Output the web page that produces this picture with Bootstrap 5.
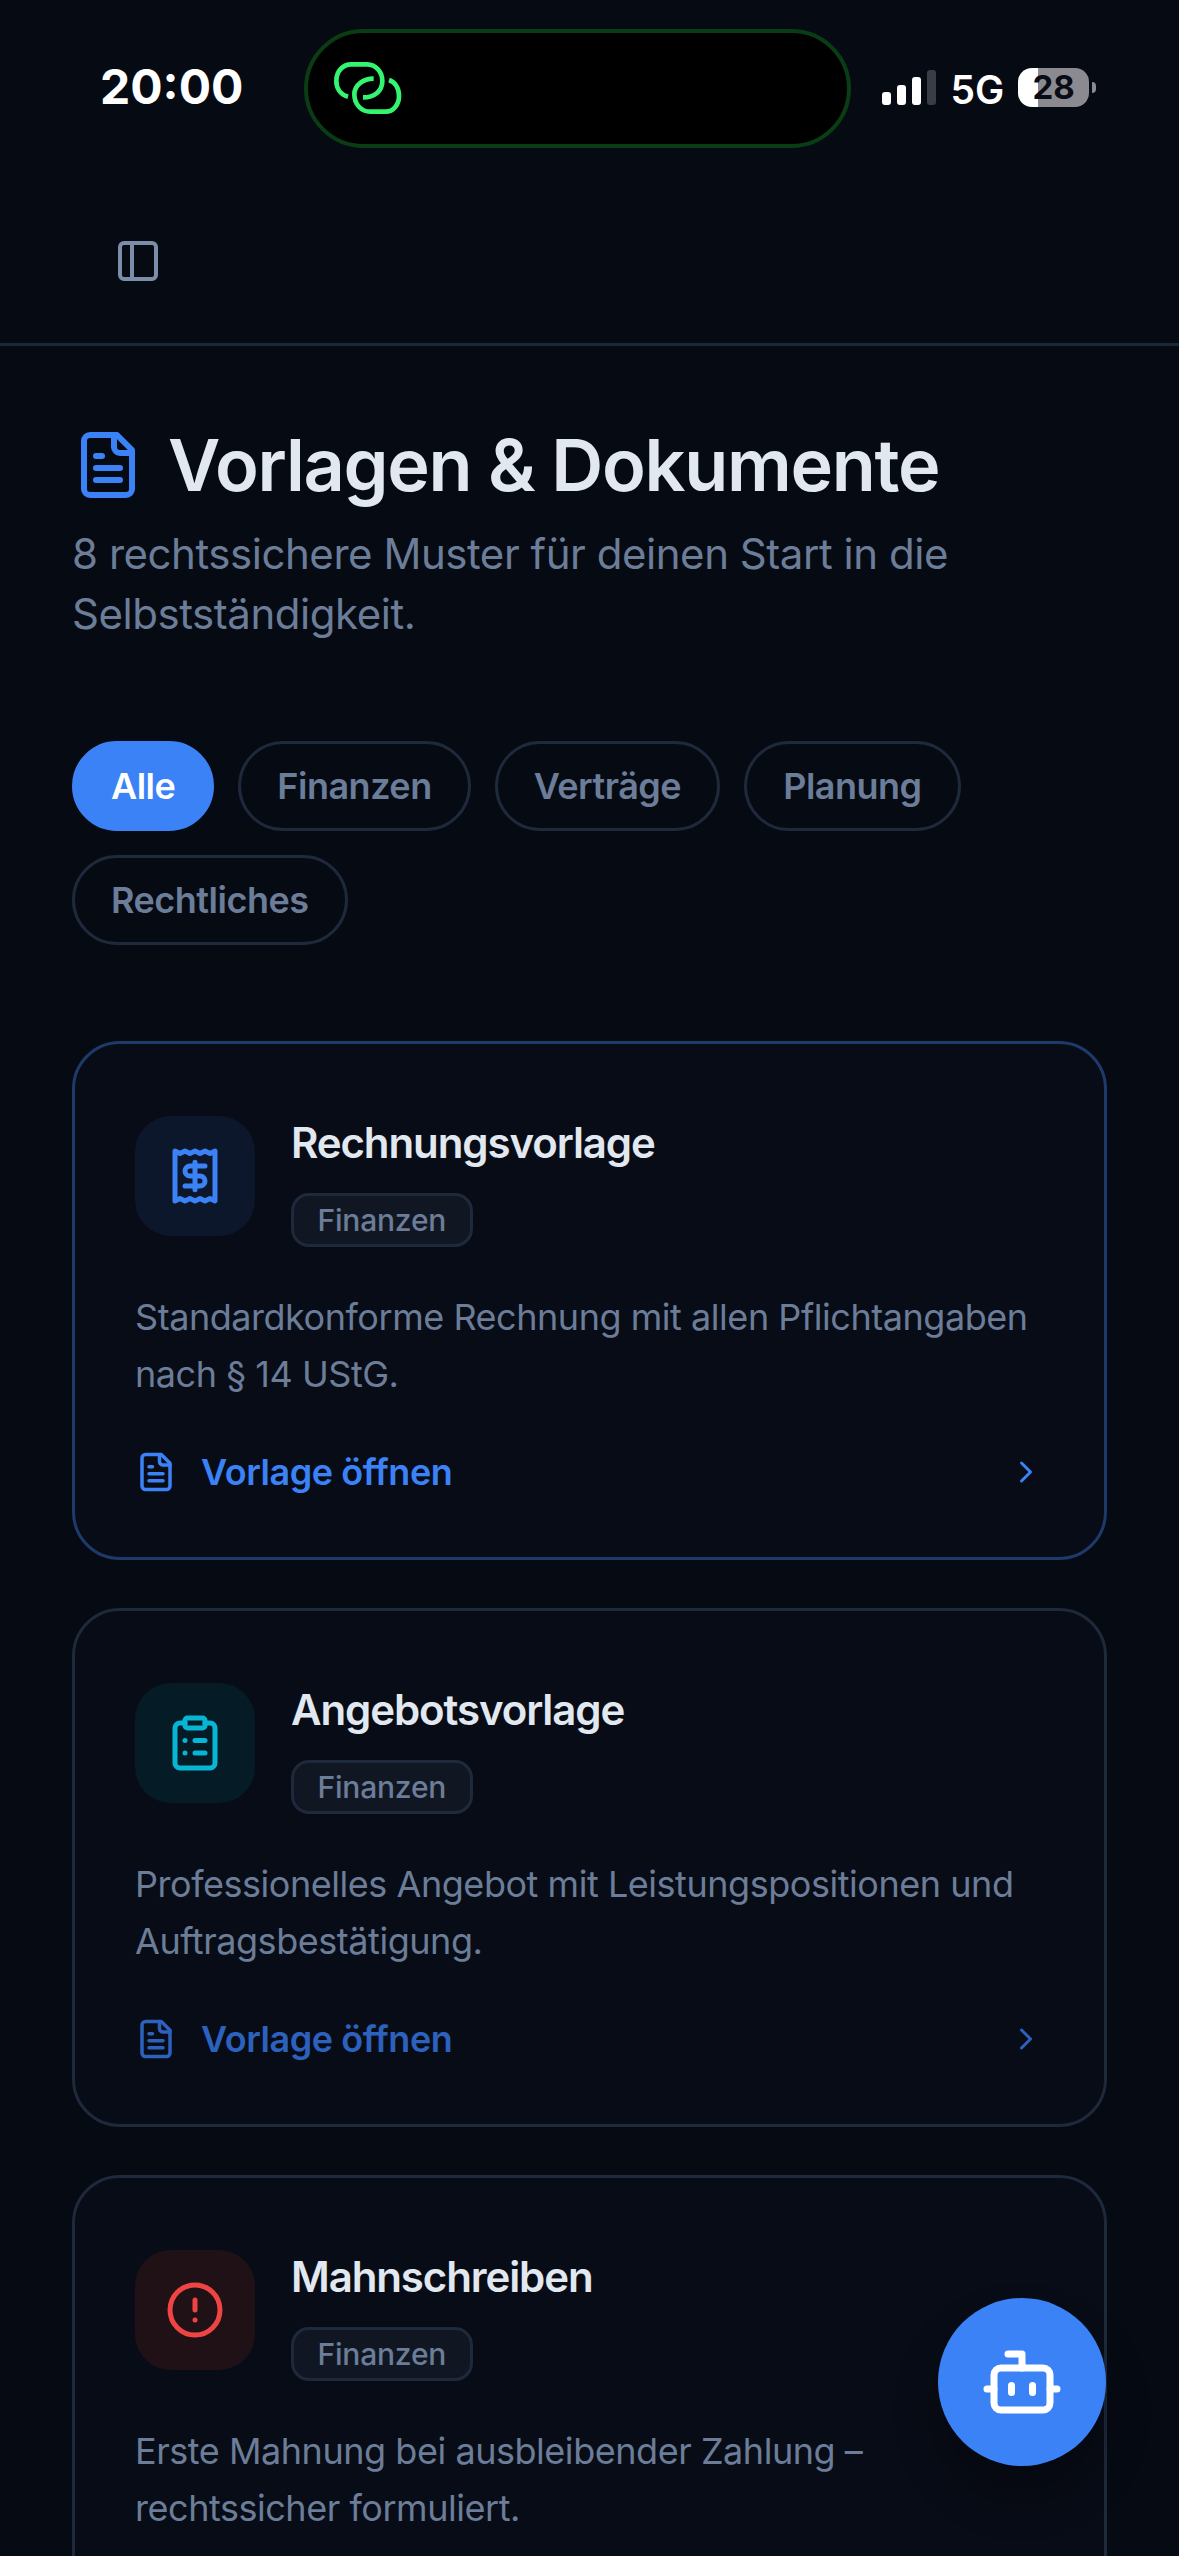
<!DOCTYPE html>
<html lang="de">
<head>
  <meta charset="UTF-8">
  <meta name="viewport" content="width=device-width, initial-scale=1">
  <title>Vorlagen &amp; Dokumente</title>
  <link href="https://cdn.jsdelivr.net/npm/bootstrap@5.3.3/dist/css/bootstrap.min.css" rel="stylesheet">
  <style>
    html, body {
      height: 2556px;
      overflow: hidden;
    }
    body {
      background: #060a13;
      font-family: Inter, "Liberation Sans", sans-serif;
      color: #e2e8f0;
    }
    svg.ico {
      fill: none;
      stroke: currentColor;
      stroke-width: 2;
      stroke-linecap: round;
      stroke-linejoin: round;
      flex-shrink: 0;
      display: block;
    }

    /* status bar */
    .status-bar {
      height: 148px;
      padding: 29px 83px 0 100px;
    }
    .clock {
      width: 205px;
      font-size: 48px;
      font-weight: 700;
      line-height: 1;
      color: #fff;
      padding-top: 34px;
    }
    .island {
      width: 548px;
      height: 119px;
      background: #000;
      border: 4px solid #0a3d14;
      border-radius: 60px;
      padding-left: 25px;
    }
    .island-logo {
      width: 70px;
      height: 55px;
      fill: none;
      stroke: #34f56f;
      stroke-width: 14;
    }
    .signal {
      margin-left: 31px;
      gap: 6px;
      height: 35px;
      margin-top: 41px;
    }
    .signal i {
      width: 9px;
      background: #fff;
      border-radius: 3px;
    }
    .signal i:nth-child(1) { height: 13px; }
    .signal i:nth-child(2) { height: 20px; }
    .signal i:nth-child(3) { height: 28px; }
    .signal i:nth-child(4) { height: 35px; background: #3a3d46; }
    .net-type {
      margin: 41px 0 0 15px;
      font-size: 39px;
      font-weight: 600;
      line-height: 1;
      color: #fff;
    }
    .battery {
      margin: 39px 0 0 14px;
      width: 71px;
      height: 39px;
      border-radius: 14px;
      background: linear-gradient(90deg, #fff 28%, #8a8a90 28%);
      color: #090c15;
      font-size: 33px;
      font-weight: 700;
      line-height: 39px;
      text-align: center;
    }
    .battery-nub {
      margin: 53px 0 0 3px;
      width: 4px;
      height: 11px;
      background: #8a8a90;
      border-radius: 0 4px 4px 0;
    }

    .top-bar {
      height: 198px;
      border-bottom: 3px solid #1a2639;
      padding: 89px 0 0 114px;
    }
    .top-bar svg {
      width: 48px;
      height: 48px;
      color: #7b8da8;
    }

    /* heading, scroll area stops at the window edge */
    .page-wrap {
      height: 2210px;
      overflow: hidden;
      padding: 83px 72px 0;
    }
    .head-icon {
      width: 72px;
      height: 72px;
      color: #3b82f6;
    }
    .page-title {
      font-size: 72px;
      font-weight: 600;
      line-height: 72px;
      letter-spacing: -1.3px;
      color: #e2e8f0;
      margin: 0;
    }
    .page-sub {
      font-size: 42px;
      line-height: 60px;
      letter-spacing: -.46px;
      color: #6b7d98;
      margin: 23px 0 0;
    }

    /* filter pills */
    .filters {
      gap: 24px;
      margin-top: 97px;
    }
    .filter-pill {
      height: 90px;
      padding: 0 36px;
      font-size: 36px;
      font-weight: 600;
      line-height: 84px;
      letter-spacing: -.5px;
      color: #6b7d98;
      background: transparent;
      border: 3px solid #1e293b;
      border-radius: 45px;
    }
    .filter-pill.active {
      background: #3b82f6;
      border-color: #3b82f6;
      color: #fff;
    }

    /* template cards */
    .tpl-list {
      gap: 48px;
      margin-top: 96px;
    }
    .tpl-card {
      background: #080c16;
      border: 3px solid #1e293b;
      border-radius: 48px;
      color: inherit;
    }
    .tpl-card.selected {
      border-color: #1e3a6b;
    }
    .tpl-card .card-body {
      padding: 72px 60px 0;
      height: 513px;
      flex: none;
    }
    .tpl-head {
      gap: 36px;
    }
    .tpl-icon {
      width: 120px;
      height: 120px;
      border-radius: 36px;
    }
    .tpl-icon svg {
      width: 60px;
      height: 60px;
    }
    .tone-blue { background: #0c172c; color: #3b82f6; }
    .tone-cyan { background: #051b26; color: #06b6d4; }
    .tone-red { background: #1f1116; color: #ef4444; }
    .tpl-name {
      font-size: 42px;
      font-weight: 600;
      line-height: 54px;
      letter-spacing: -1.1px;
      color: #e2e8f0;
      margin: 0;
    }
    .tpl-tag {
      display: inline-block;
      margin-top: 23px;
      padding: 0 23.5px;
      height: 54px;
      font-size: 30px;
      font-weight: 500;
      line-height: 48px;
      letter-spacing: -.2px;
      color: #6b7d98;
      background: #111722;
      border: 3px solid #1e293b;
      border-radius: 18px;
    }
    .tpl-desc {
      font-size: 36px;
      line-height: 57px;
      letter-spacing: -.46px;
      color: #6b7d98;
      margin: 42px 0 0;
    }
    .tpl-link {
      margin-top: 42px;
      color: #3b82f6;
      font-size: 36px;
      font-weight: 600;
      line-height: 54px;
      letter-spacing: -.45px;
      text-decoration: none;
    }
    .tpl-link.dim {
      color: #2c61bd;
    }
    .tpl-link .doc {
      width: 42px;
      height: 42px;
      margin-right: 24px;
    }
    .tpl-link .chev {
      width: 36px;
      height: 36px;
    }

    /* assistant button */
    .fab {
      position: absolute;
      left: 938px;
      top: 2298px;
      width: 168px;
      height: 168px;
      border: 0;
      border-radius: 50%;
      background: #3b82f6;
      color: #fff;
      box-shadow: 0 30px 45px rgba(0, 0, 0, .3);
    }
    .fab svg {
      width: 84px;
      height: 84px;
    }
  </style>
</head>
<body>

<!-- Status bar -->
<div class="status-bar d-flex align-items-start">
  <div class="clock">20:00</div>
  <div class="island d-flex align-items-center">
    <svg class="island-logo" viewBox="160 155 210 165">
      <path d="M205 262C180 255 170 235 170 215C170 185 190 165 215 165H262C290 165 308 190 308 215C308 245 285 264 250 264"/>
      <path d="M282 208C250 208 224 228 224 255C224 285 245 307 272 307H318C342 307 358 285 358 260C358 235 345 218 328 212"/>
    </svg>
  </div>
  <div class="signal d-flex align-items-end"><i></i><i></i><i></i><i></i></div>
  <div class="net-type">5G</div>
  <div class="battery">28</div>
  <div class="battery-nub"></div>
</div>

<!-- Sidebar toggle -->
<div class="top-bar">
  <svg class="ico" viewBox="0 0 24 24"><rect x="3" y="3" width="18" height="18" rx="2"/><path d="M9 3v18"/></svg>
</div>

<main class="page-wrap">
  <div class="d-flex align-items-center gap-4">
    <svg class="ico head-icon" viewBox="0 0 24 24">
      <path d="M15 2H6a2 2 0 0 0-2 2v16a2 2 0 0 0 2 2h12a2 2 0 0 0 2-2V7Z"/>
      <path d="M14 2v4a2 2 0 0 0 2 2h4"/><path d="M10 9H8"/><path d="M16 13H8"/><path d="M16 17H8"/>
    </svg>
    <h1 class="page-title">Vorlagen &amp; Dokumente</h1>
  </div>
  <p class="page-sub">8 rechtssichere Muster für deinen Start in die Selbstständigkeit.</p>

  <div class="filters d-flex flex-wrap">
    <button class="filter-pill active">Alle</button>
    <button class="filter-pill">Finanzen</button>
    <button class="filter-pill">Verträge</button>
    <button class="filter-pill">Planung</button>
    <button class="filter-pill">Rechtliches</button>
  </div>

  <div class="tpl-list d-flex flex-column">

    <div class="card tpl-card selected">
      <div class="card-body">
        <div class="tpl-head d-flex align-items-start">
          <div class="tpl-icon tone-blue d-flex align-items-center justify-content-center flex-shrink-0">
            <svg class="ico" viewBox="0 0 24 24">
              <path d="M4 2v20l2-1 2 1 2-1 2 1 2-1 2 1 2-1 2 1V2l-2 1-2-1-2 1-2-1-2 1-2-1-2 1Z"/>
              <path d="M16 8h-6a2 2 0 1 0 0 4h4a2 2 0 1 1 0 4H8"/><path d="M12 17.5v-11"/>
            </svg>
          </div>
          <div class="tpl-text">
            <h2 class="tpl-name">Rechnungsvorlage</h2>
            <span class="tpl-tag">Finanzen</span>
          </div>
        </div>
        <p class="tpl-desc">Standardkonforme Rechnung mit allen Pflichtangaben nach § 14 UStG.</p>
        <a href="#" class="tpl-link d-flex align-items-center">
          <svg class="ico doc" viewBox="0 0 24 24">
            <path d="M15 2H6a2 2 0 0 0-2 2v16a2 2 0 0 0 2 2h12a2 2 0 0 0 2-2V7Z"/>
            <path d="M14 2v4a2 2 0 0 0 2 2h4"/><path d="M10 9H8"/><path d="M16 13H8"/><path d="M16 17H8"/>
          </svg>
          <span class="flex-grow-1">Vorlage öffnen</span>
          <svg class="ico chev" viewBox="0 0 24 24"><path d="m9 18 6-6-6-6"/></svg>
        </a>
      </div>
    </div>

    <div class="card tpl-card">
      <div class="card-body">
        <div class="tpl-head d-flex align-items-start">
          <div class="tpl-icon tone-cyan d-flex align-items-center justify-content-center flex-shrink-0">
            <svg class="ico" viewBox="0 0 24 24">
              <rect x="8" y="2" width="8" height="4" rx="1"/>
              <path d="M16 4h2a2 2 0 0 1 2 2v14a2 2 0 0 1-2 2H6a2 2 0 0 1-2-2V6a2 2 0 0 1 2-2h2"/>
              <path d="M12 11h4"/><path d="M12 16h4"/><path d="M8 11h.01"/><path d="M8 16h.01"/>
            </svg>
          </div>
          <div class="tpl-text">
            <h2 class="tpl-name">Angebotsvorlage</h2>
            <span class="tpl-tag">Finanzen</span>
          </div>
        </div>
        <p class="tpl-desc">Professionelles Angebot mit Leistungspositionen und Auftragsbestätigung.</p>
        <a href="#" class="tpl-link dim d-flex align-items-center">
          <svg class="ico doc" viewBox="0 0 24 24">
            <path d="M15 2H6a2 2 0 0 0-2 2v16a2 2 0 0 0 2 2h12a2 2 0 0 0 2-2V7Z"/>
            <path d="M14 2v4a2 2 0 0 0 2 2h4"/><path d="M10 9H8"/><path d="M16 13H8"/><path d="M16 17H8"/>
          </svg>
          <span class="flex-grow-1">Vorlage öffnen</span>
          <svg class="ico chev" viewBox="0 0 24 24"><path d="m9 18 6-6-6-6"/></svg>
        </a>
      </div>
    </div>

    <div class="card tpl-card">
      <div class="card-body">
        <div class="tpl-head d-flex align-items-start">
          <div class="tpl-icon tone-red d-flex align-items-center justify-content-center flex-shrink-0">
            <svg class="ico" viewBox="0 0 24 24">
              <circle cx="12" cy="12" r="10"/><path d="M12 8v4"/><path d="M12 16h.01"/>
            </svg>
          </div>
          <div class="tpl-text">
            <h2 class="tpl-name">Mahnschreiben</h2>
            <span class="tpl-tag">Finanzen</span>
          </div>
        </div>
        <p class="tpl-desc">Erste Mahnung bei ausbleibender Zahlung – rechtssicher formuliert.</p>
      </div>
    </div>

  </div>
</main>

<button class="fab d-flex align-items-center justify-content-center">
  <svg class="ico" viewBox="0 0 24 24">
    <path d="M12 8V4H8"/><rect x="4" y="8" width="16" height="12" rx="2"/>
    <path d="M2 14h2"/><path d="M20 14h2"/><path d="M15 13v2"/><path d="M9 13v2"/>
  </svg>
</button>

<script src="https://cdn.jsdelivr.net/npm/bootstrap@5.3.3/dist/js/bootstrap.bundle.min.js"></script>
</body>
</html>
